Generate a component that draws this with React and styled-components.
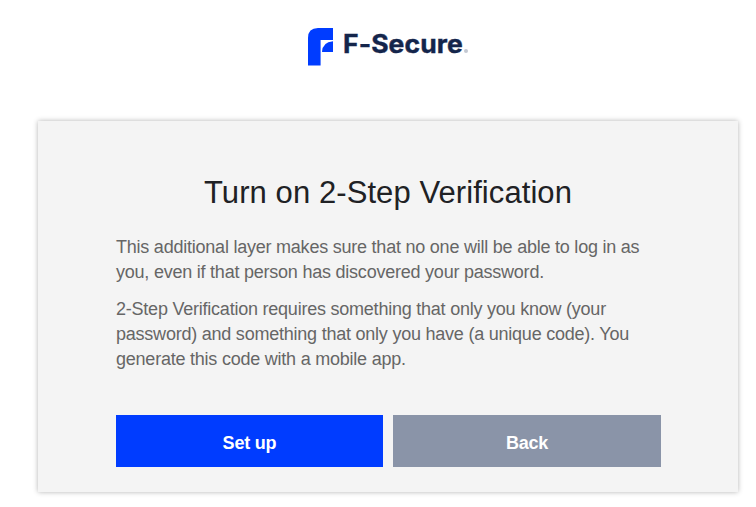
import React from "react";
import styled, { createGlobalStyle } from "styled-components";

const GlobalStyle = createGlobalStyle`
  * { box-sizing: border-box; }
  body { margin: 0; background: #fff; overflow: hidden; font-family: "Liberation Sans", Arial, sans-serif; }
`;

const Page = styled.main`
  height: 507px;
  display: flex;
  flex-direction: column;
`;

const Brand = styled.header`
  height: 121px;
  padding: 27px 0 0 307px;
  display: flex;
  align-items: flex-start;
`;

const Mark = styled.svg`
  display: block;
  width: 27px;
  height: 39px;
`;

const Wordmark = styled.span`
  width: 120px;
  margin: 3px 0 0 9px;
  color: #14254b;
  font: 700 25px/28px Inter, sans-serif;
  letter-spacing: 0.1px;
  -webkit-text-stroke: 0.4px #14254b;
  white-space: nowrap;
  transform: scaleX(1.06);
  transform-origin: left center;
`;

const Registered = styled.span`
  width: 4px;
  height: 4px;
  margin: 22px 0 0 1px;
  border-radius: 50%;
  background: #c3c8d1;
`;

const Card = styled.section`
  width: 700px;
  height: 371px;
  margin-left: 38px;
  padding: 52px 77px 0 78px;
  background: #f4f4f4;
  box-shadow: 0 0 5px rgba(0, 0, 0, 0.3);
`;

const Title = styled.h1`
  margin: 0 0 22px -1px;
  color: #202124;
  font-size: 31px;
  font-weight: 400;
  line-height: 40px;
  letter-spacing: 0.08px;
  text-align: center;
  white-space: nowrap;
`;

const Paragraph = styled.p`
  margin: 0 0 12px;
  color: #666;
  font-size: 18px;
  line-height: 25px;
  letter-spacing: -0.228px;
  white-space: nowrap;
`;

const Actions = styled.div`
  display: grid;
  grid-template-columns: 267px 268px;
  gap: 10px;
  margin-top: 43px;
`;

const Button = styled.button`
  height: 52px;
  padding: 4px 0 0;
  border: 0;
  color: #fff;
  background: ${({ $primary }) => ($primary ? "#003cff" : "#8a94a8")};
  font: 700 18px/24px "Liberation Sans", Arial, sans-serif;
  letter-spacing: -0.2px;
`;

export default function App() {
  return (
    <>
      <GlobalStyle />
      <Page>
        <Brand>
          <Mark viewBox="0 0 27 39" aria-hidden="true">
            <path fill="#003cff" d="M11 1H26V13H13.6V38.5H1V11Q1 1 11 1Z" />
            <path fill="#003cff" d="M26 14.2V25H15Q15.4 15 26 14.2Z" />
          </Mark>
          <Wordmark>F-Secure</Wordmark>
          <Registered />
        </Brand>
        <Card>
          <Title>Turn on 2-Step Verification</Title>
          <Paragraph>
            This additional layer makes sure that no one will be able to log in as
            <br />
            you, even if that person has discovered your password.
          </Paragraph>
          <Paragraph>
            2-Step Verification requires something that only you know (your
            <br />
            password) and something that only you have (a unique code). You
            <br />
            generate this code with a mobile app.
          </Paragraph>
          <Actions>
            <Button $primary>Set up</Button>
            <Button>Back</Button>
          </Actions>
        </Card>
      </Page>
    </>
  );
}
